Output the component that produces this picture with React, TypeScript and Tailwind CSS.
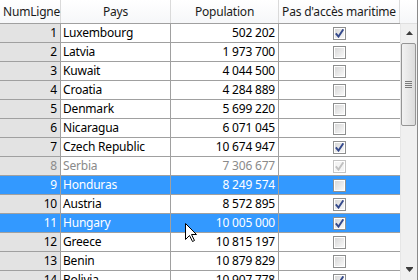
import React from "react";

type Row = { n: number; pays: string; pop: string; chk: boolean; sel?: boolean; dis?: boolean };

const rows: Row[] = [
  { n: 1, pays: "Luxembourg", pop: "502 202", chk: true },
  { n: 2, pays: "Latvia", pop: "1 973 700", chk: false },
  { n: 3, pays: "Kuwait", pop: "4 044 500", chk: false },
  { n: 4, pays: "Croatia", pop: "4 284 889", chk: false },
  { n: 5, pays: "Denmark", pop: "5 699 220", chk: false },
  { n: 6, pays: "Nicaragua", pop: "6 071 045", chk: false },
  { n: 7, pays: "Czech Republic", pop: "10 674 947", chk: true },
  { n: 8, pays: "Serbia", pop: "7 306 677", chk: true, dis: true },
  { n: 9, pays: "Honduras", pop: "8 249 574", chk: false, sel: true },
  { n: 10, pays: "Austria", pop: "8 572 895", chk: true },
  { n: 11, pays: "Hungary", pop: "10 005 000", chk: true, sel: true },
  { n: 12, pays: "Greece", pop: "10 815 197", chk: false },
  { n: 13, pays: "Benin", pop: "10 879 829", chk: false },
  { n: 14, pays: "Bolivia", pop: "10 907 778", chk: true },
];

function CheckBox({ checked, disabled }: { checked: boolean; disabled?: boolean }) {
  return (
    <div
      className={
        "w-[13px] h-[13px] border flex items-center justify-center " +
        (disabled ? "border-[#c4c4c4]" : "border-[#8e8f8f]")
      }
    >
      <div
        className={
          "w-[11px] h-[11px] border border-white flex items-center justify-center " +
          (disabled ? "bg-[#f4f4f4]" : "bg-gradient-to-br from-[#d8d8d8] to-[#f8f8f8]")
        }
      >
        {checked && (
          <svg width="9" height="9" viewBox="0 0 9 9">
            <path
              d="M0.8 4.3 L3.5 7.6 L8.3 0.4"
              fill="none"
              stroke={disabled ? "#c0c0c0" : "#34498c"}
              strokeWidth="1.9"
            />
          </svg>
        )}
      </div>
    </div>
  );
}

export default function App() {
  return (
    <div
      className="relative w-[418px] h-[280px] overflow-hidden flex bg-white border-r border-[#8a8a8a] text-[12px] leading-none tracking-[-0.2px]"
      style={{ fontFamily: '"Noto Sans", "Open Sans", sans-serif' }}
    >
      <div className="w-[400px] flex flex-col shrink-0">
        <div className="h-[24px] flex border-b border-[#a0a0a0] bg-gradient-to-b from-white to-[#f6f7f9] text-[#1a1a1a] shrink-0">
          <div className="w-[61px] border-r border-[#dadada] flex items-center pl-[3px]">NumLigne</div>
          <div className="w-[110px] border-r border-[#dadada] flex items-center justify-center">Pays</div>
          <div className="w-[108px] border-r border-[#dadada] flex items-center justify-center">Population</div>
          <div className="w-[121px] border-r border-[#dadada] flex items-center justify-center">Pas d'accès maritime</div>
        </div>
        {rows.map((r) => {
          const txt = r.sel ? "text-white" : r.dis ? "text-[#8a8a8a]" : "text-black";
          const bg = r.sel ? "bg-[#3399ff]" : "bg-white";
          return (
            <div key={r.n} className={"h-[19px] flex border-b border-[#a0a0a0] shrink-0 " + txt}>
              <div
                className={
                  "w-[61px] border-r border-[#a0a0a0] flex items-center justify-end pr-[3px] " +
                  (r.sel ? "bg-[#3399ff]" : "bg-[#e3e3e3]")
                }
              >
                {r.n}
              </div>
              <div className={"w-[110px] border-r border-[#a0a0a0] flex items-center pl-[2px] " + bg}>{r.pays}</div>
              <div className={"w-[108px] border-r border-[#a0a0a0] flex items-center justify-end pr-[3px] " + bg}>
                {r.pop}
              </div>
              <div className={"w-[121px] flex items-center justify-center " + bg}>
                <CheckBox checked={r.chk} disabled={r.dis} />
              </div>
            </div>
          );
        })}
      </div>
      <div className="w-[17px] flex flex-col shrink-0">
        <div className="h-[24px] shrink-0 bg-gradient-to-b from-white to-[#f6f7f9] border-b border-[#e0e0e0]" />
        <div className="flex-1 flex flex-col bg-[#f0f0f0] border-l border-[#e6e6e6]">
          <div className="h-[18px] flex items-center justify-center shrink-0">
            <svg width="7" height="4" viewBox="0 0 7 4">
              <path d="M3.5 0 L7 4 L0 4 Z" fill="#3c3c3c" />
            </svg>
          </div>
          <div className="mt-[1px] h-[83px] w-[15px] rounded-[2px] border border-[#959595] bg-gradient-to-r from-[#f2f2f2] to-[#dcdcdc] flex flex-col items-center justify-center gap-[1px] shrink-0">
            <div className="w-[7px] h-[1px] bg-[#7a7a7a]" />
            <div className="w-[7px] h-[1px] bg-[#7a7a7a]" />
            <div className="w-[7px] h-[1px] bg-[#7a7a7a]" />
            <div className="w-[7px] h-[1px] bg-[#7a7a7a]" />
          </div>
          <div className="flex-1" />
          <div className="h-[18px] flex items-center justify-center shrink-0 mb-[2px]">
            <svg width="7" height="5" viewBox="0 0 7 5">
              <path d="M0 0 L7 0 L7 1 L0 1 Z M0 1 L7 1 L3.5 5 Z" fill="#3c3c3c" />
            </svg>
          </div>
        </div>
      </div>
      <svg className="absolute left-[185px] top-[223px]" width="13" height="20" viewBox="0 0 13 20">
        <path
          d="M0.5 0.5 L0.5 16.5 L4.5 12.5 L7.5 18.5 L9.5 17.5 L6.5 11.5 L11.5 11.5 Z"
          fill="white"
          stroke="black"
          strokeWidth="1"
          strokeLinejoin="miter"
        />
      </svg>
    </div>
  );
}
